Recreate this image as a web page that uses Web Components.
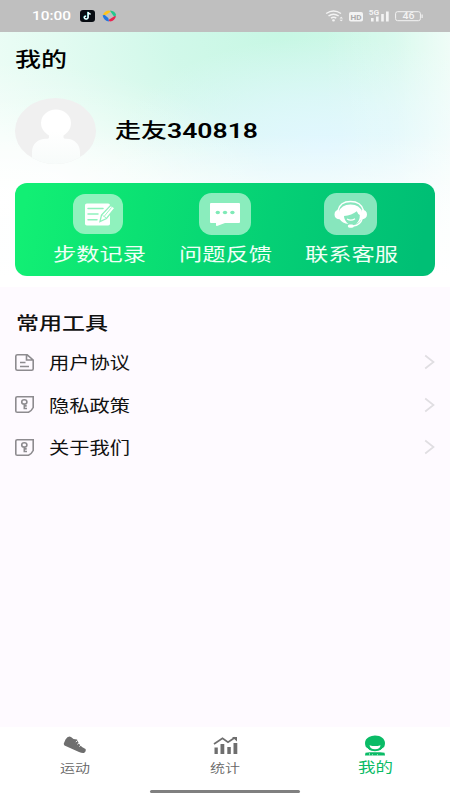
<!DOCTYPE html>
<html lang="zh-CN">
<head>
<meta charset="utf-8">
<title>我的</title>
<style>
html,body{margin:0;height:100%;overflow:hidden}
body{font-family:Roboto,"Noto Sans CJK SC",sans-serif;background:#fefaff}
</style>
</head>
<body>
<profile-page></profile-page>
<script>
const define=(name,html,setup)=>customElements.define(name,class extends HTMLElement{
  connectedCallback(){
    if(this.shadowRoot)return;
    const t=document.createElement('template');
    t.innerHTML=html;
    this.attachShadow({mode:'open'}).append(t.content.cloneNode(true));
    if(setup)setup(this,this.shadowRoot);
  }
});

// Text stretched horizontally to the width given in its "w" attribute.
define('wide-text',`<style>
:host{display:block;white-space:nowrap;flex:none;line-height:1.3}
span{display:inline-block;transform-origin:0 50%}
</style><span><slot></slot></span>`,(el,root)=>{
  const w=+el.getAttribute('w');
  el.style.width=w+'px';
  el.style.fontSize=el.getAttribute('size')+'px';
  const s=root.querySelector('span');
  el.fit=()=>{s.style.transform='none';s.style.transform='scaleX('+w/s.getBoundingClientRect().width+')'};
  el.fit();
});

const setLabel=(el,root)=>{
  const t=root.querySelector('wide-text');
  t.textContent=el.getAttribute('label');
  t.fit();
};

define('status-bar',`<style>
:host{display:flex;align-items:center;height:32px;box-sizing:border-box;background:#bfbfbf;padding:0 27px 0 32px;color:#fff}
.gap{flex:1}
svg{display:block;flex:none}
</style>
<wide-text size="12.5" w="39" style="font-weight:500;margin-top:1px">10:00</wide-text>
<svg style="margin-left:9px" width="15" height="12" viewBox="0 0 15 12"><rect width="15" height="12" rx="3" fill="#080c12"/><path d="M8.2 2v5.6a1.9 1.5 0 1 1-2-1.5M8.2 2.2q.5 1.9 2.5 2" fill="none" stroke="#45ddd9" stroke-width="1.4" transform="translate(-.4 -.2)"/><path d="M8.2 2v5.6a1.9 1.5 0 1 1-2-1.5M8.2 2.2q.5 1.9 2.5 2" fill="none" stroke="#fff" stroke-width="1.3"/></svg>
<svg style="margin-left:7px" width="15" height="12" viewBox="0 0 15 12"><path d="M1 5Q2 1 7 .5l2 1L3 5.5z" fill="#ffc51b"/><path d="M8 .5q5 .4 6.2 4.5l-1.7 2.3L8.8 2z" fill="#22c98d"/><path d="M14 6q-1 4.8-6 5.500l-2-1.200L12 6.500z" fill="#eb2350"/><path d="M.6 5.500 2.400 4.700 6.300 8 7 11.400Q2 11 .6 5.500" fill="#2477df"/></svg>
<div class="gap"></div>
<svg width="98" height="14" viewBox="0 0 98 14">
<g fill="none" stroke="#f3f3f3"><path d="M1.200 4.500q7.300-5.200 14.800 0M3.500 7q5-3.600 10.200 0M6 9.200q2.700-1.900 5.300 0" stroke-width="1.500"/><rect x="70.600" y="2.700" width="24.800" height="9" rx="2" stroke-width="1"/></g>
<g fill="#f3f3f3"><ellipse cx="8.500" cy="11.400" rx="1.400" ry="1.100"/><path d="M14.500 9.400 16.200 7.800 18 9.400zM14.500 10.700h3.500l-1.800 1.600z"/><rect x="24" y="3" width="14" height="9.500" rx="1.800"/><path d="M96.500 5.500h1.200v3.500h-1.200zM46 9h2.600v3.500H46zM51 7.500h2.600v5H51zM56.200 5h2.600v7.500h-2.600zM61 2.500h2.700v10H61z"/>
<text x="43.800" y="6" font-size="6.500" font-weight="700" textLength="10.500" lengthAdjust="spacingAndGlyphs" font-family="Roboto,sans-serif">5G</text>
<text x="77.500" y="10.400" font-size="9" textLength="12" lengthAdjust="spacingAndGlyphs" font-weight="500" font-family="Roboto,sans-serif">46</text>
<text x="25.500" y="10.500" font-size="7.500" textLength="11" lengthAdjust="spacingAndGlyphs" font-weight="700" fill="#acacac" font-family="Roboto,sans-serif">HD</text></g>
</svg>`);

define('user-header',`<style>
:host{display:block}
wide-text{color:#000}
.title{padding:15px 0 0 15px;height:53px;box-sizing:border-box}
.user{display:flex;align-items:center;padding:0 15px;height:91px}
svg{display:block;margin-right:19px}
</style>
<div class="title"><wide-text size="20.5" w="52" style="font-weight:500">我的</wide-text></div>
<div class="user">
<svg width="81" height="66" viewBox="0 0 81 66"><defs><clipPath id="c"><ellipse cx="40.5" cy="33" rx="40.5" ry="33"/></clipPath><linearGradient id="g" x2="0" y2="1"><stop offset=".4" stop-color="#fff"/><stop offset="1" stop-color="#f7fbfa"/></linearGradient></defs><g clip-path="url(#c)"><path fill="#f0f0f0" d="M0 0h81v66H0z"/><path fill="url(#g)" d="M26 25a15 13.5 0 0 1 30 0c0 6-3.500 10-7.500 12.500v2c0 1 1 1.200 3 1.200 8 0 13.500 6 13.500 13V66H17V54c0-8 6-13.300 14-13.300 2 0 3-.2 3-1.200v-2C30 35 26 31 26 25z"/></g></svg>
<wide-text size="20" w="52" style="font-weight:500">走友</wide-text><wide-text size="20" w="91" style="font-weight:600">340818</wide-text>
</div>`);

define('action-item',`<style>
:host{display:flex;flex-direction:column;align-items:center;width:126px;color:#effff6}
.tile{display:flex;align-items:center;justify-content:center;height:42px;margin:9.500px 2px 0 0}
wide-text{margin-top:8px}
</style><div class="tile"><slot></slot></div><wide-text size="18.5" w="93"></wide-text>`,setLabel);

define('action-card',`<style>
:host{display:flex;justify-content:center;height:93px;margin:0 15px;border-radius:12px;background:linear-gradient(100deg,#12ef74 3%,#0be173 30%,#05d075 60%,#00bf75 96%)}
svg{display:block}
</style>
<action-item label="步数记录"><svg width="50" height="40" viewBox="0 0 50 40"><rect width="50" height="40" rx="12" fill="#8ff2bd"/><rect x="12" y="9.500" width="25" height="22" rx="1.800" fill="#fff"/><path d="M15 14.500h15M15 20h10M15 25.700h9" stroke="#8ff2bd" stroke-width="1.500" stroke-linecap="round"/><path d="M27 27.500 28.500 21 37.500 11.500 42 13.800 33.500 24.500z" fill="#fff" stroke="#8ff2bd" stroke-width="1.300"/><path d="m29.500 21.500 3.500 2.200M31.500 22l7-8.500" stroke="#8ff2bd" stroke-width=".9"/></svg></action-item>
<action-item label="问题反馈"><svg style="margin-left:2px" width="52" height="42" viewBox="0 0 52 42"><rect width="52" height="42" rx="12.500" fill="#8aedbd"/><path d="M12 10h28q1 0 1 1v18q0 1-1 1H26l-8 3q-1 .3-1-1v-2h-5q-1 0-1-1V11q0-1 1-1" fill="#fff"/><g fill="#7feab7"><ellipse cx="18.800" cy="19.500" rx="2.200" ry="1.800"/><ellipse cx="26" cy="19.500" rx="2.200" ry="1.800"/><ellipse cx="33.400" cy="19.500" rx="2.200" ry="1.800"/></g></svg></action-item>
<action-item label="联系客服"><svg width="53" height="42" viewBox="0 0 53 42"><rect width="53" height="42" rx="12.500" fill="#87e6bd"/><path d="M14 17.500Q16 8.500 26.500 8.500T39.500 17.500" fill="none" stroke="#fff" stroke-width="1.400"/><path d="M15 25.500V19Q17 11.500 26.500 11.500T38 19v6q-2 4.500-6 6 4-3.500 3.800-9-2-.8-3-3.700-5 4-12.800 4.700 0 4.500 4.500 8-6-.5-9.500-5.500z" fill="#fff"/><path d="M23 26q4 2.400 8-.3" fill="none" stroke="#fff" stroke-width="1.300"/><path d="M15.500 16.500q-5 .5-5 5t5.500 4.800zM37.500 16.500q5.500.5 5.500 5T37 26.300z" fill="#fff"/><path d="M38.500 25q-2 7.500-9.500 8" fill="none" stroke="#fff" stroke-width="1.300"/><rect x="23.800" y="31.400" width="6" height="3.400" rx="1.700" fill="#fff"/></svg></action-item>`);

define('tool-row',`<style>
:host{display:flex;align-items:center;height:42.500px;padding:0 15px}
.icon{width:19px;margin-right:15px}
wide-text{color:#111;padding-top:4px}
.gap{flex:1}
svg{display:block}
</style><div class="icon"><slot></slot></div><wide-text size="16.500" w="81"></wide-text><div class="gap"></div>
<svg width="11" height="16" viewBox="0 0 11 16"><path d="M1.200 1.500 9.500 8l-8.300 6.500" fill="none" stroke="#e0dee2" stroke-width="1.700"/></svg>`,setLabel);

const keyIcon=`<svg width="19" height="17" viewBox="0 0 19 17" fill="none" stroke="#8d8b8f" stroke-width="1.600"><path d="M2.300.8H18.200V11.500Q16.500 15 13.500 16.200H2.300Q.8 16.200.8 14.900V2.100Q.8.8 2.300.8z"/><ellipse cx="9.300" cy="5.900" rx="2.600" ry="2.100"/><path d="M9.300 8v5.200M9.300 9.900h2.400M9.300 12.500h2.700"/></svg>`;

define('tool-list',`<style>
:host{display:block;padding-top:25px}
wide-text{margin:0 0 5.500px 15.500px;color:#111}
svg{display:block}
</style>
<wide-text size="18" w="92" style="font-weight:500">常用工具</wide-text>
<tool-row label="用户协议"><svg width="19" height="17" viewBox="0 0 19 17" fill="none" stroke="#8d8b8f" stroke-width="1.600"><path d="M2.500.8h9.700l6 5.200v8.800q0 1.400-1.500 1.400H2.500Q.8 16.200.8 14.800V2.200Q.8.800 2.500.8zM11.500 1v5h6.500M5 8.500h5.500M5 12.500h9"/></svg></tool-row>
<tool-row label="隐私政策">${keyIcon}</tool-row>
<tool-row label="关于我们">${keyIcon}</tool-row>`);

define('tab-item',`<style>
:host{display:flex;flex-direction:column;align-items:center;flex:1;color:#666;font-weight:350}
:host([active]){color:#0abb66;font-weight:400}
.icon{height:22px;display:flex;align-items:center;margin-top:7px}
</style><div class="icon"><slot></slot></div>`,(el,root)=>{
  const a=el.hasAttribute('active'),t=document.createElement('wide-text');
  t.setAttribute('size',a?14:12.5);t.setAttribute('w',a?35:30);
  t.style.marginTop=a?'1.5px':'5px';
  t.textContent=el.getAttribute('label');root.append(t);
});

define('tab-bar',`<style>
:host{display:flex;flex-direction:column;height:73px;background:#fff}
nav{display:flex;height:63px}
.home{width:150px;height:3px;border-radius:2px;background:#808080;margin:0 auto}
svg{display:block}
</style><nav>
<tab-item label="运动"><svg width="24" height="18" viewBox="0 0 24 18"><path d="M.8 7.500 2.500 3.500Q5-.5 8 1l2.500 2 3.500.5q1.500 4.500 5 7.500l3.500 2q1 2-1.500 4-2 .4-5-1L1.500 9.500Q.6 8.500.8 7.500z" fill="#6e6e6e"/><path d="m12.800 6 1.800-1.400m-.3 3.700 1.900-1.500m.1 3.700 1.900-1.500" stroke="#fff" stroke-width=".9"/></svg></tab-item>
<tab-item label="统计"><svg width="25" height="19" viewBox="0 0 25 19"><path d="M1.500 11.500h3.300V18H1.500zM7.500 8h3.800v10H7.500zM14.300 11h3.500v7h-3.500zM20.500 7h3.800v11h-3.800z" fill="#6e6e6e"/><path d="m1 8 8.500-5.700 5.500 4 7-4.800" fill="none" stroke="#6e6e6e" stroke-width="1.700"/><path d="M19 1h5v4.500z" fill="#6e6e6e"/></svg></tab-item>
<tab-item label="我的" active><svg width="22" height="21" viewBox="0 0 22 21"><path d="M11 .5C17 .5 21 4 21 8q0 4.500-3.500 6.500-3 1.800-6.500 1.800-4 0-6.500-1.800Q1 12.500 1 8 1 4 5 2 7.500.5 11 .5z" fill="#0abb66"/><path d="M5.500 10.200q5.500 1.800 11 0-.3 3.800-5.500 4-5-.2-5.500-4z" fill="#fff"/><path d="m2.500 12.500 2.500 2.500m14.500-2.500-2.500 2.500" stroke="#fff" stroke-width=".8"/><path d="M1.500 17.800 6 17.300h10l4.500.5.5 2.700H1z" fill="#0abb66"/><path d="M5.500 18v2.500m3-1.500v1.500m5-1.500v1.500" stroke="#b8efd2" stroke-width=".7"/></svg></tab-item>
</nav><div class="home"></div>`);

define('profile-page',`<style>
:host{display:flex;flex-direction:column;width:450px;height:800px;background:#fefaff}
.top{display:flow-root;height:255px;box-sizing:border-box;background:
 linear-gradient(to bottom,#fff0 40%,#ffffff80 60%,#fff 96%),
 radial-gradient(ellipse 280px 140px at 0 170px,#fff 0,#ffffffb0 35%,#ffffff40 70%,#fff0 100%),
 linear-gradient(to left,#ffffff90 0,#ffffff30 12%,#fff0 28%),
 radial-gradient(ellipse 210px 110px at 325px 115px,#e1f7ff 0,#e1f7ffa0 45%,#e1f7ff00 100%),
 radial-gradient(ellipse 320px 210px at 280px 0,#c7f7e4 0,#c9f7e6cc 35%,#caf7e655 70%,#c8f7e400 100%),
 #effdf7}
action-card{margin-top:7px}
.gap{flex:1}
</style>
<status-bar></status-bar>
<div class="top"><user-header></user-header><action-card></action-card></div>
<tool-list></tool-list><div class="gap"></div><tab-bar></tab-bar>`);
</script>
</body>
</html>
